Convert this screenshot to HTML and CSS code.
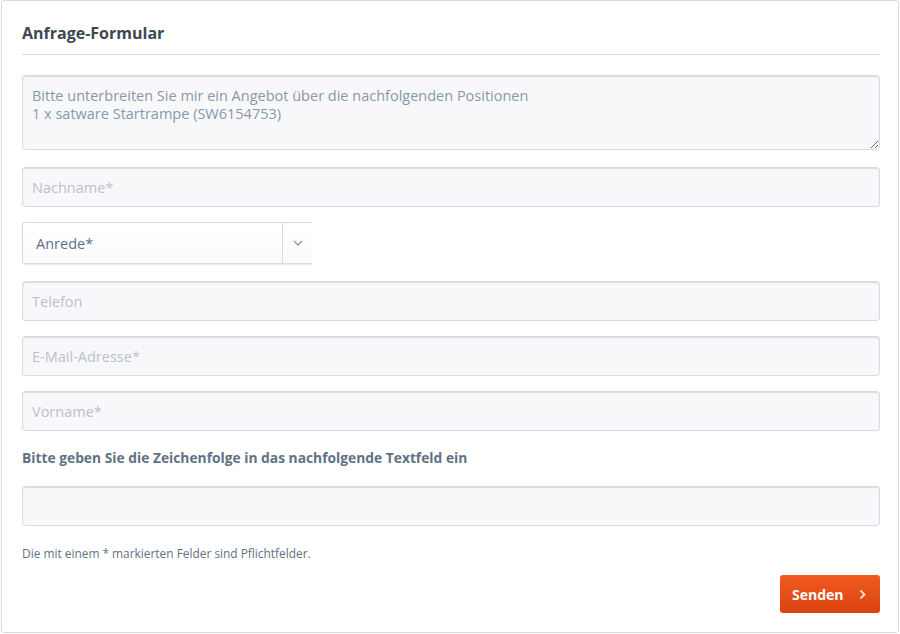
FILE: index.html
```html
<!DOCTYPE html>
<html lang="de">
<head>
<meta charset="utf-8">
<title>Anfrage-Formular</title>
<link rel="stylesheet" href="styles.css">
</head>
<body>
<div class="page">
  <form class="panel">
    <h2 class="panel-title">Anfrage-Formular</h2>
    <div class="fields">
      <textarea class="field area">Bitte unterbreiten Sie mir ein Angebot über die nachfolgenden Positionen
1 x satware Startrampe (SW6154753)</textarea>
      <input class="field gap-a" type="text" placeholder="Nachname*">
      <div class="select gap-b">
        <select class="select-input">
          <option>Anrede*</option>
          <option>Herr</option>
          <option>Frau</option>
        </select>
        <span class="select-arrow">
          <svg width="10" height="6" viewBox="0 0 10 6"><path d="M1 1l4 4 4-4" fill="none" stroke="#8798a9" stroke-width="1.3"/></svg>
        </span>
      </div>
      <input class="field gap-c" type="text" placeholder="Telefon">
      <input class="field gap-b" type="text" placeholder="E-Mail-Adresse*">
      <input class="field gap-b" type="text" placeholder="Vorname*">
      <label class="label">Bitte geben Sie die Zeichenfolge in das nachfolgende Textfeld ein</label>
      <input class="field captcha" type="text">
      <p class="note">Die mit einem * markierten Felder sind Pflichtfelder.</p>
      <div class="actions">
        <button type="button" class="btn">Senden <span class="chev">
          <svg width="7" height="11" viewBox="0 0 7 11"><path d="M1.5 1.5l4 4-4 4" fill="none" stroke="#fff" stroke-width="1.6"/></svg>
        </span></button>
      </div>
    </div>
  </form>
</div>
</body>
</html>
```

FILE: styles.css
```css
* { box-sizing: border-box; }
html, body { margin: 0; padding: 0; background: #fff; }
body {
  font-family: "Open Sans", "Noto Sans", "DejaVu Sans", sans-serif;
  color: #5f7285;
}
.page { padding: 0 1px 0 1px; }
.panel {
  width: 898px;
  height: 633px;
  border: 1px solid #dadae5;
  border-radius: 3px;
  padding: 20px 18px 0 20px;
  margin: 0;
}
.panel-title {
  margin: 0;
  font-size: 16px;
  line-height: 24px;
  font-weight: 700;
  color: #3c4852;
  padding: 0 0 9px 0;
  border-bottom: 1px solid #dadae5;
}
.fields {
  display: flex;
  flex-direction: column;
  padding: 20px 0 0 0;
}
.field {
  display: block;
  width: 858px;
  height: 40px;
  background: #f8f8fa;
  border: 1px solid #dadae5;
  border-radius: 3px;
  box-shadow: inset 0 1px 1px #dadae5;
  padding: 0 9px;
  font-family: inherit;
  font-size: 14.5px;
  color: #8798a9;
  outline: none;
  margin: 0;
}
.field::placeholder { color: #b9c2cc; opacity: 1; }
.area {
  height: 75px;
  padding: 11px 9px 9px 9px;
  line-height: 18px;
  resize: vertical;
}
.gap-a { margin-top: 17px; }
.gap-b { margin-top: 15px; }
.gap-c { margin-top: 17px; }
.select {
  display: flex;
  width: 290px;
  height: 42px;
  border: 1px solid #dadae5;
  border-right: none;
  border-radius: 3px 0 0 3px;
  background: linear-gradient(#fff, #fbfbfc);
  box-shadow: 0 1px 1px rgba(218,218,229,0.6);
}
.select-input {
  appearance: none;
  -webkit-appearance: none;
  flex: 1;
  border: none;
  background: transparent;
  font-family: inherit;
  font-size: 14.5px;
  color: #5f7285;
  padding: 0 13px;
  outline: none;
}
.select-arrow {
  width: 30px;
  border-left: 1px solid #dadae5;
  display: flex;
  align-items: center;
  justify-content: center;
}
.label {
  margin-top: 17px;
  font-size: 13.8px;
  line-height: 20px;
  font-weight: 700;
  color: #5f7285;
}
.captcha { margin-top: 18px; }
.note {
  margin: 19px 0 0 0;
  font-size: 11.9px;
  line-height: 16px;
  color: #5f7285;
}
.actions {
  display: flex;
  justify-content: flex-end;
  width: 858px;
  margin-top: 14px;
}
.btn {
  width: 100px;
  height: 38px;
  border: none;
  border-radius: 3px;
  background: linear-gradient(#f05b20, #da430f);
  color: #fff;
  font-family: inherit;
  font-size: 14px;
  font-weight: 700;
  padding: 0 12px;
  display: flex;
  align-items: center;
  justify-content: space-between;
}
.chev { display: flex; align-items: center; margin-right: 2px; }
```
